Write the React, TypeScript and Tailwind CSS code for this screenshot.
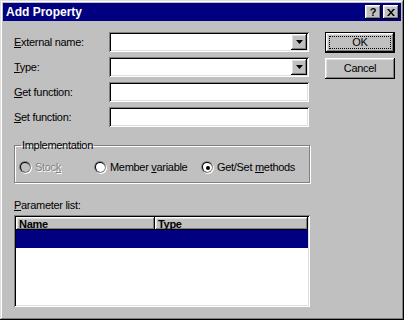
import React from 'react';

const raised =
  'bg-[#c0c0c0] shadow-[inset_-1px_-1px_0_#000,inset_1px_1px_0_#fff,inset_-2px_-2px_0_#808080,inset_2px_2px_0_#dfdfdf]';
const sunken =
  'bg-white shadow-[inset_1px_1px_0_#808080,inset_-1px_-1px_0_#fff,inset_2px_2px_0_#000,inset_-2px_-2px_0_#dfdfdf]';

function U({ children }: { children: React.ReactNode }) {
  return <span className="underline underline-offset-[1px]">{children}</span>;
}

function Combo() {
  return (
    <div className={`${sunken} w-[200px] h-[20px] flex justify-end p-[2px]`}>
      <div className={`${raised} w-[16px] h-[16px] flex items-center justify-center`}>
        <svg width="7" height="4" viewBox="0 0 7 4">
          <path d="M0 0h7L3.5 4z" fill="#000" />
        </svg>
      </div>
    </div>
  );
}

function Field() {
  return <div className={`${sunken} w-[200px] h-[20px]`} />;
}

function Radio({ checked, disabled }: { checked?: boolean; disabled?: boolean }) {
  return (
    <div className="w-[12px] h-[12px] rounded-full bg-[#808080] p-[1px] shadow-[1px_1px_0_#fff]">
      <div
        className={`w-full h-full rounded-full flex items-center justify-center ${
          disabled ? 'bg-[#c0c0c0]' : 'bg-white'
        } border-t border-l border-black`}
      >
        {checked && <div className="w-[4px] h-[4px] rounded-full bg-black" />}
      </div>
    </div>
  );
}

export default function App() {
  const rows: [React.ReactNode, boolean][] = [
    [<><U>E</U>xternal name:</>, true],
    [<><U>T</U>ype:</>, true],
    [<><U>G</U>et function:</>, false],
    [<><U>S</U>et function:</>, false],
  ];

  return (
    <div
      className="w-[404px] h-[320px] bg-[#c0c0c0] p-[3px] text-[11px] tracking-[-0.3px] text-black shadow-[inset_-1px_-1px_0_#000,inset_1px_1px_0_#dfdfdf,inset_-2px_-2px_0_#808080,inset_2px_2px_0_#fff] flex flex-col"
      style={{ fontFamily: '"Liberation Sans", Arial, sans-serif' }}
    >
      <div className="h-[18px] bg-[#000080] flex items-center pl-[3px] pr-[2px]">
        <span className="text-white font-bold text-[12px] tracking-normal flex-1">Add Property</span>
        <div className="flex">
          <div className={`${raised} w-[16px] h-[14px] flex items-center justify-center font-bold text-[11px] leading-none`}>
            ?
          </div>
          <div className={`${raised} w-[16px] h-[14px] ml-[2px] flex items-center justify-center`}>
            <svg width="8" height="7" viewBox="0 0 8 7">
              <path d="M0 0h2l2 2.5L6 0h2L5 3.5 8 7H6L4 4.5 2 7H0l3-3.5z" fill="#000" />
            </svg>
          </div>
        </div>
      </div>

      <div className="flex pl-[11px] pt-[11px]">
        <div className="w-[296px]">
          <div className="flex flex-col gap-[5px]">
            {rows.map(([label, combo], i) => (
              <div key={i} className="flex items-center">
                <div className="w-[95px]">{label}</div>
                {combo ? <Combo /> : <Field />}
              </div>
            ))}
          </div>

          <fieldset className="mt-[13px] border border-[#808080] shadow-[1px_1px_0_#fff,inset_1px_1px_0_#fff] h-[43px] pl-[4px] pr-[4px]">
            <legend className="px-[1px] ml-[2px] leading-none">Implementation</legend>
            <div className="flex items-center mt-[8px]">
              <div className="flex items-center w-[75px]">
                <Radio disabled />
                <span className="ml-[4px] text-[#808080] [text-shadow:1px_1px_0_#fff]">
                  Stoc<U>k</U>
                </span>
              </div>
              <div className="flex items-center w-[107px]">
                <Radio />
                <span className="ml-[4px]">
                  Member <U>v</U>ariable
                </span>
              </div>
              <div className="flex items-center">
                <Radio checked />
                <span className="ml-[4px]">
                  Get/Set <U>m</U>ethods
                </span>
              </div>
            </div>
          </fieldset>

          <div className="mt-[17px] leading-none">
            <U>P</U>arameter list:
          </div>
          <div className={`${sunken} mt-[4px] w-[296px] h-[92px] p-[2px]`}>
            <div className="flex h-[13px] font-bold text-[11px] leading-[12px]">
              <div className={`${raised} w-[139px] pl-[3px] pt-[1px]`}>Name</div>
              <div className={`${raised} flex-1 pl-[3px] pt-[1px]`}>Type</div>
            </div>
            <div className="h-[18px] bg-[#000080]" />
          </div>
        </div>

        <div className="ml-[15px] flex flex-col gap-[5px]">
          <div className="w-[70px] h-[21px] border border-black">
            <div className={`${raised} w-full h-full p-[3px]`}>
              <div className="w-full h-full border border-dotted border-black flex items-center justify-center">
                OK
              </div>
            </div>
          </div>
          <div className={`${raised} w-[70px] h-[21px] flex items-center justify-center`}>Cancel</div>
        </div>
      </div>
    </div>
  );
}
